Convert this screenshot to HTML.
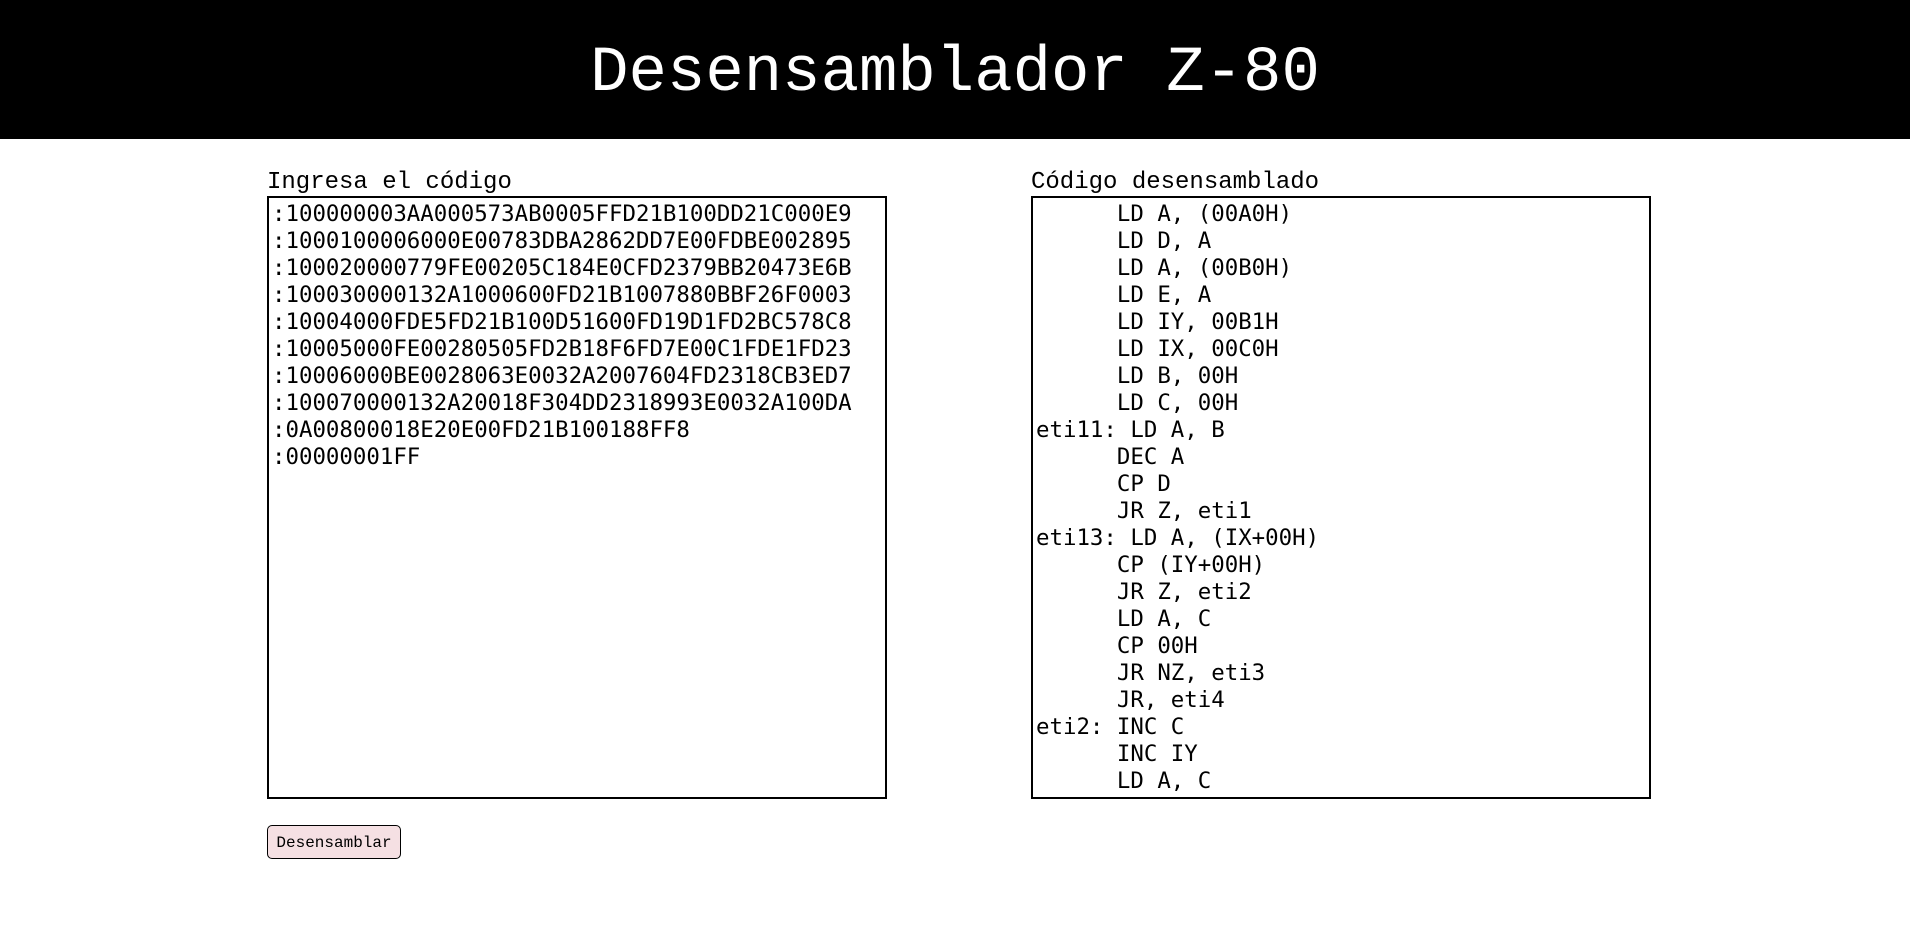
<!DOCTYPE html>
<html><head><meta charset="utf-8"><style>
body{margin:0;width:1910px;height:930px;background:#fff;overflow:hidden;font-family:"Liberation Mono",monospace;}
header{position:absolute;left:0;top:0;width:1910px;height:139px;background:#000;color:#fff;text-align:center;font-size:64px;line-height:149px;}
.lbl{position:absolute;top:168px;font-size:24px;line-height:30px;color:#000;}
.box{position:absolute;top:196px;height:596px;border:2px solid #000;box-sizing:content-box;margin:0;padding:3px 0 0 3px;font-family:"DejaVu Sans Mono",monospace;font-size:22.4px;line-height:27px;white-space:pre;overflow:hidden;color:#000;}
button{position:absolute;left:267px;top:825px;width:134px;height:34px;background:#f5e0e3;border:1px solid #000;border-radius:5px;font-family:"Liberation Mono",monospace;font-size:16px;padding:2px 0 0 0;color:#000;}
</style></head><body>
<header>Desensamblador Z-80</header>
<div class="lbl" style="left:267px">Ingresa el código</div>
<div class="lbl" style="left:1031px">Código desensamblado</div>
<div class="box" style="left:267px;width:613px">:100000003AA000573AB0005FFD21B100DD21C000E9
:1000100006000E00783DBA2862DD7E00FDBE002895
:100020000779FE00205C184E0CFD2379BB20473E6B
:100030000132A1000600FD21B1007880BBF26F0003
:10004000FDE5FD21B100D51600FD19D1FD2BC578C8
:10005000FE00280505FD2B18F6FD7E00C1FDE1FD23
:10006000BE0028063E0032A2007604FD2318CB3ED7
:100070000132A20018F304DD2318993E0032A100DA
:0A00800018E20E00FD21B100188FF8
:00000001FF</div>
<div class="box" style="left:1031px;width:613px">      LD A, (00A0H)
      LD D, A
      LD A, (00B0H)
      LD E, A
      LD IY, 00B1H
      LD IX, 00C0H
      LD B, 00H
      LD C, 00H
eti11: LD A, B
      DEC A
      CP D
      JR Z, eti1
eti13: LD A, (IX+00H)
      CP (IY+00H)
      JR Z, eti2
      LD A, C
      CP 00H
      JR NZ, eti3
      JR, eti4
eti2: INC C
      INC IY
      LD A, C</div>
<button>Desensamblar</button>
</body></html>
